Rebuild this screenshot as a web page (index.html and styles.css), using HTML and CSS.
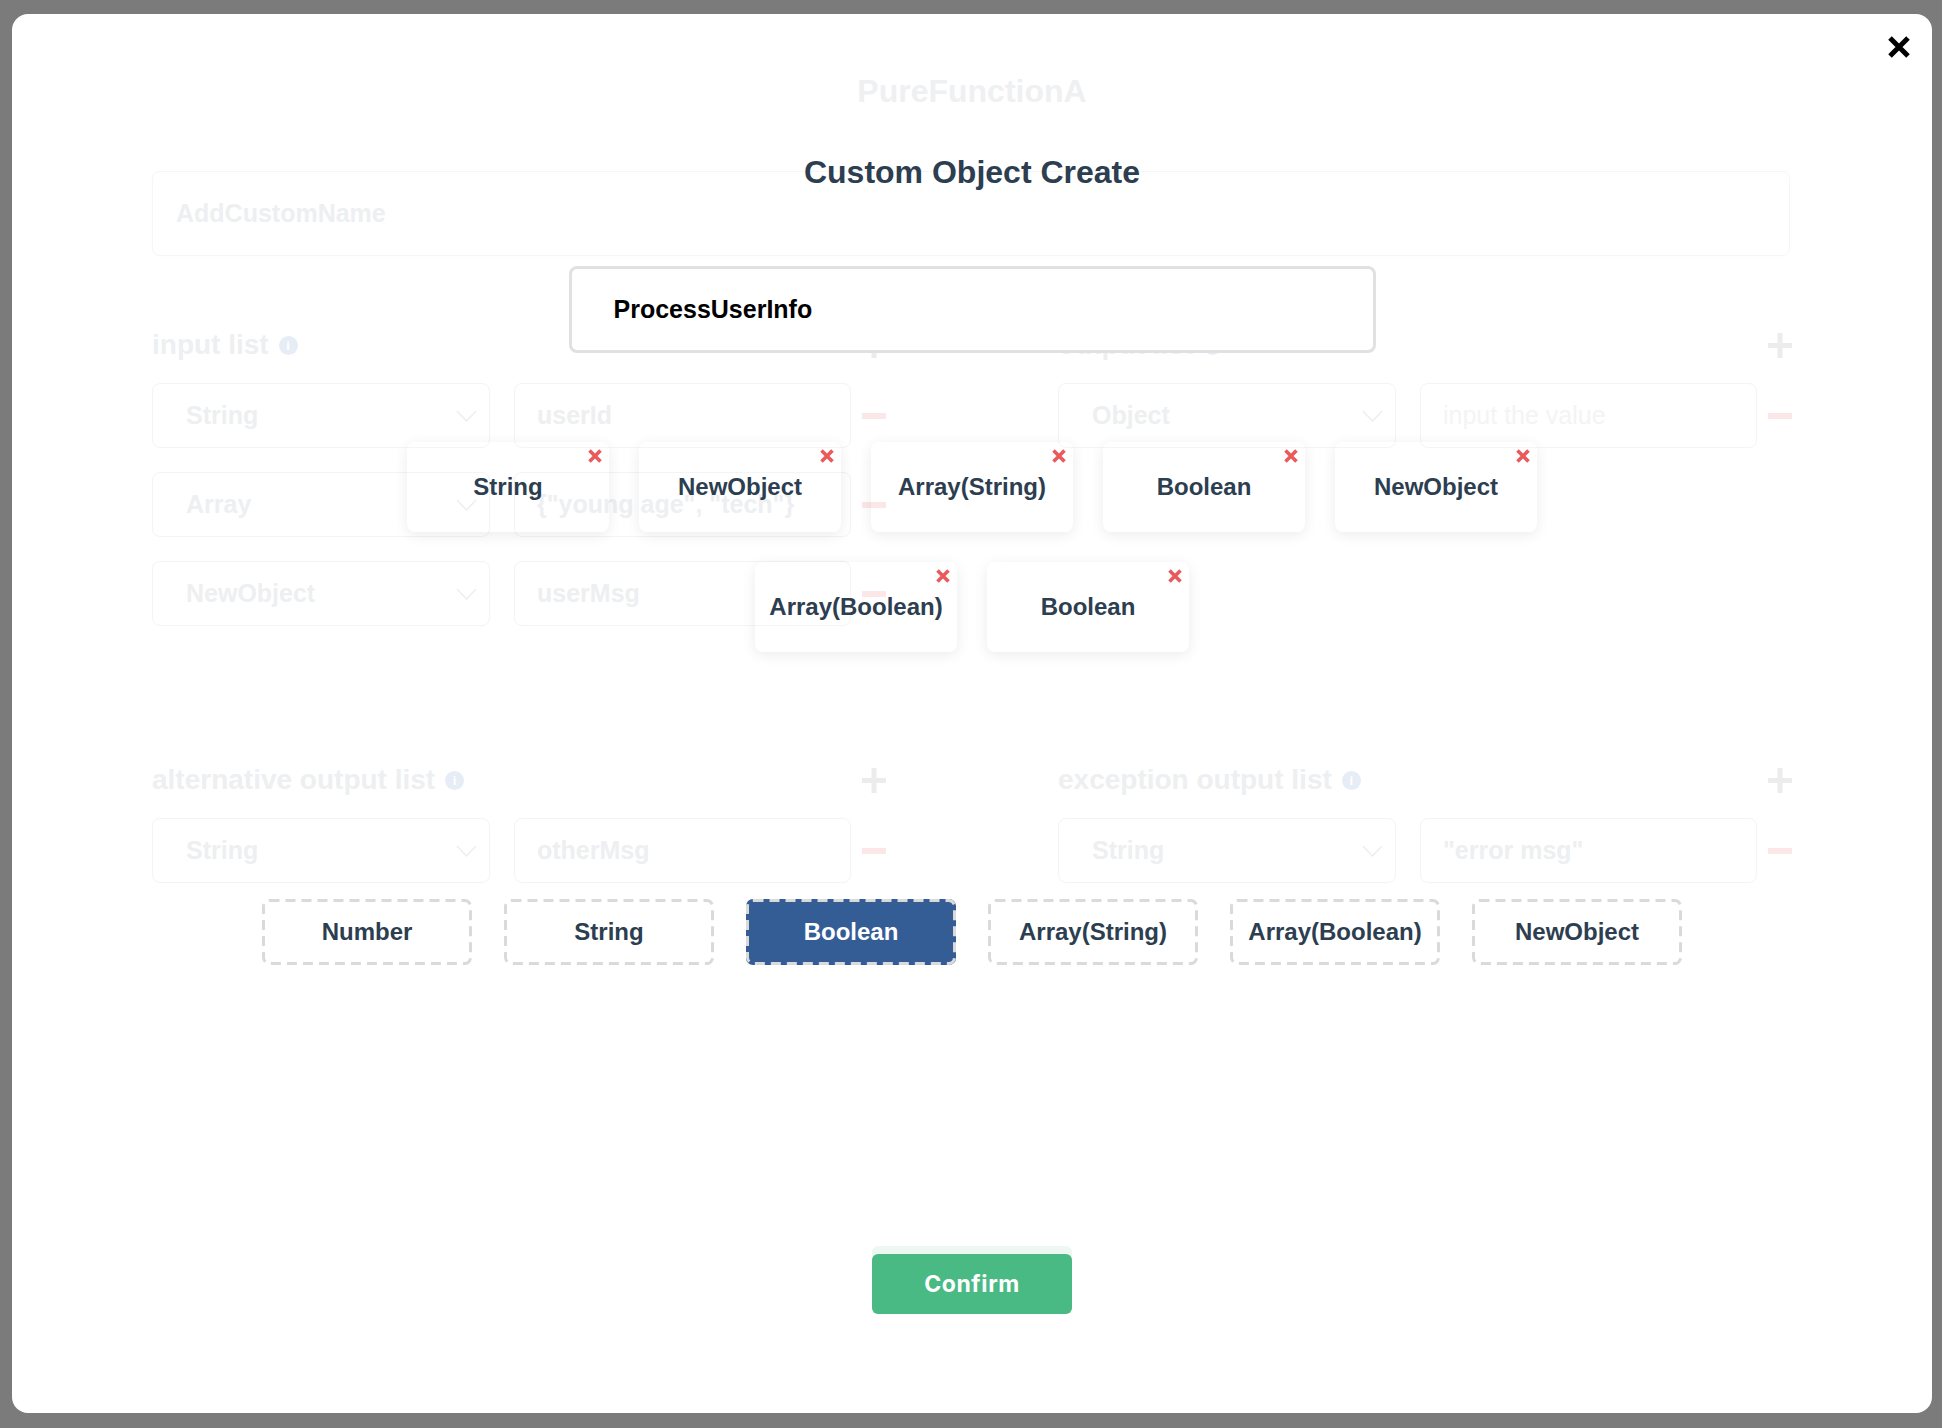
FILE: index.html
```html
<!DOCTYPE html>
<html lang="en">
<head>
<meta charset="utf-8">
<title>Custom Object Create</title>
<link rel="stylesheet" href="styles.css">
</head>
<body>
<div class="backdrop">
  <div class="modal">
    <div class="bg-form">
      <div class="pf-title">PureFunctionA</div>
      <div class="name-box">AddCustomName</div>
      <div class="sections">
        <section class="col">
          <div class="sec-head"><span class="sec-title">input list</span><span class="info">i</span><span class="plus"><svg width="24" height="25" viewBox="0 0 24 25"><path d="M12 0v25M0 12.5h24" stroke="#ececec" stroke-width="5"/></svg></span></div>
          <div class="rows">
            <div class="row"><div class="sel"><span>String</span><svg width="21" height="12" viewBox="0 0 21 12"><polyline points="1,1 10.5,11 20,1" fill="none" stroke="#eeeeee" stroke-width="1.5"/></svg></div><div class="val">userId</div><span class="minus"></span></div>
            <div class="row"><div class="sel"><span>Array</span><svg width="21" height="12" viewBox="0 0 21 12"><polyline points="1,1 10.5,11 20,1" fill="none" stroke="#eeeeee" stroke-width="1.5"/></svg></div><div class="val">{"young age", "tech"}</div><span class="minus"></span></div>
            <div class="row"><div class="sel"><span>NewObject</span><svg width="21" height="12" viewBox="0 0 21 12"><polyline points="1,1 10.5,11 20,1" fill="none" stroke="#eeeeee" stroke-width="1.5"/></svg></div><div class="val">userMsg</div><span class="minus"></span></div>
          </div>
        </section>
        <section class="col">
          <div class="sec-head"><span class="sec-title">output list</span><span class="info">i</span><span class="plus"><svg width="24" height="25" viewBox="0 0 24 25"><path d="M12 0v25M0 12.5h24" stroke="#ececec" stroke-width="5"/></svg></span></div>
          <div class="rows">
            <div class="row"><div class="sel"><span>Object</span><svg width="21" height="12" viewBox="0 0 21 12"><polyline points="1,1 10.5,11 20,1" fill="none" stroke="#eeeeee" stroke-width="1.5"/></svg></div><div class="val ph">input the value</div><span class="minus"></span></div>
          </div>
        </section>
      </div>
      <div class="sections sections-2">
        <section class="col">
          <div class="sec-head"><span class="sec-title">alternative output list</span><span class="info">i</span><span class="plus"><svg width="24" height="25" viewBox="0 0 24 25"><path d="M12 0v25M0 12.5h24" stroke="#ececec" stroke-width="5"/></svg></span></div>
          <div class="rows">
            <div class="row"><div class="sel"><span>String</span><svg width="21" height="12" viewBox="0 0 21 12"><polyline points="1,1 10.5,11 20,1" fill="none" stroke="#eeeeee" stroke-width="1.5"/></svg></div><div class="val">otherMsg</div><span class="minus"></span></div>
          </div>
        </section>
        <section class="col">
          <div class="sec-head"><span class="sec-title">exception output list</span><span class="info">i</span><span class="plus"><svg width="24" height="25" viewBox="0 0 24 25"><path d="M12 0v25M0 12.5h24" stroke="#ececec" stroke-width="5"/></svg></span></div>
          <div class="rows">
            <div class="row"><div class="sel"><span>String</span><svg width="21" height="12" viewBox="0 0 21 12"><polyline points="1,1 10.5,11 20,1" fill="none" stroke="#eeeeee" stroke-width="1.5"/></svg></div><div class="val">"error msg"</div><span class="minus"></span></div>
          </div>
        </section>
      </div>
      <div class="ghost-confirm"></div>
    </div>

    <div class="fg">
      <h2 class="title">Custom Object Create</h2>
      <div class="name-input">ProcessUserInfo</div>
      <div class="tags">
        <div class="tag">String<span class="tag-x"><svg width="14" height="14" viewBox="0 0 14 14"><path d="M1.5 1.5L12.5 12.5M12.5 1.5L1.5 12.5" stroke="#eb5a5a" stroke-width="3.6"/></svg></span></div>
        <div class="tag">NewObject<span class="tag-x"><svg width="14" height="14" viewBox="0 0 14 14"><path d="M1.5 1.5L12.5 12.5M12.5 1.5L1.5 12.5" stroke="#eb5a5a" stroke-width="3.6"/></svg></span></div>
        <div class="tag">Array(String)<span class="tag-x"><svg width="14" height="14" viewBox="0 0 14 14"><path d="M1.5 1.5L12.5 12.5M12.5 1.5L1.5 12.5" stroke="#eb5a5a" stroke-width="3.6"/></svg></span></div>
        <div class="tag">Boolean<span class="tag-x"><svg width="14" height="14" viewBox="0 0 14 14"><path d="M1.5 1.5L12.5 12.5M12.5 1.5L1.5 12.5" stroke="#eb5a5a" stroke-width="3.6"/></svg></span></div>
        <div class="tag">NewObject<span class="tag-x"><svg width="14" height="14" viewBox="0 0 14 14"><path d="M1.5 1.5L12.5 12.5M12.5 1.5L1.5 12.5" stroke="#eb5a5a" stroke-width="3.6"/></svg></span></div>
        <div class="tag">Array(Boolean)<span class="tag-x"><svg width="14" height="14" viewBox="0 0 14 14"><path d="M1.5 1.5L12.5 12.5M12.5 1.5L1.5 12.5" stroke="#eb5a5a" stroke-width="3.6"/></svg></span></div>
        <div class="tag">Boolean<span class="tag-x"><svg width="14" height="14" viewBox="0 0 14 14"><path d="M1.5 1.5L12.5 12.5M12.5 1.5L1.5 12.5" stroke="#eb5a5a" stroke-width="3.6"/></svg></span></div>
      </div>
      <div class="types">
        <div class="type"><svg class="dash" width="210" height="66" viewBox="0 0 210 66"><rect x="1.5" y="1.5" width="207" height="63" rx="6" fill="none" stroke="#dadada" stroke-width="3" stroke-dasharray="10 6"/></svg>Number</div>
        <div class="type"><svg class="dash" width="210" height="66" viewBox="0 0 210 66"><rect x="1.5" y="1.5" width="207" height="63" rx="6" fill="none" stroke="#dadada" stroke-width="3" stroke-dasharray="10 6"/></svg>String</div>
        <div class="type active"><svg class="dash" width="210" height="66" viewBox="0 0 210 66"><rect x="1.5" y="1.5" width="207" height="63" rx="6" fill="none" stroke="#dadada" stroke-width="3" stroke-dasharray="10 6"/></svg>Boolean</div>
        <div class="type"><svg class="dash" width="210" height="66" viewBox="0 0 210 66"><rect x="1.5" y="1.5" width="207" height="63" rx="6" fill="none" stroke="#dadada" stroke-width="3" stroke-dasharray="10 6"/></svg>Array(String)</div>
        <div class="type"><svg class="dash" width="210" height="66" viewBox="0 0 210 66"><rect x="1.5" y="1.5" width="207" height="63" rx="6" fill="none" stroke="#dadada" stroke-width="3" stroke-dasharray="10 6"/></svg>Array(Boolean)</div>
        <div class="type"><svg class="dash" width="210" height="66" viewBox="0 0 210 66"><rect x="1.5" y="1.5" width="207" height="63" rx="6" fill="none" stroke="#dadada" stroke-width="3" stroke-dasharray="10 6"/></svg>NewObject</div>
      </div>
      <button class="confirm">Confirm</button>
    </div>

    <button class="close" aria-label="close"><svg width="24" height="24" viewBox="0 0 24 24"><path d="M3 3L21 21M21 3L3 21" stroke="#000" stroke-width="5"/></svg></button>
  </div>
</div>
</body>
</html>
```

FILE: styles.css
```css
* { box-sizing: border-box; }
html, body { margin: 0; padding: 0; }
body {
  width: 1942px;
  height: 1428px;
  overflow: hidden;
  background: #7b7b7b;
  font-family: "Liberation Sans", Arial, sans-serif;
}
.backdrop {
  height: 1428px;
  padding: 14px 10px 15px 12px;
}
.modal {
  position: relative;
  width: 1920px;
  height: 1399px;
  background: #fff;
  border-radius: 16px;
  overflow: hidden;
}

/* faded form behind */
.bg-form { padding: 57px 140px 0; }
.pf-title {
  font-size: 32px;
  line-height: 40px;
  font-weight: 700;
  color: #eff0f2;
  text-align: center;
}
.name-box {
  margin-top: 60px;
  width: 1638px;
  height: 85px;
  border: 1px solid #f5f5f5;
  border-radius: 8px;
  padding-left: 23px;
  display: flex;
  align-items: center;
  font-size: 25px;
  font-weight: 700;
  color: #edeff1;
  box-shadow: 0 0 6px rgba(0,0,0,0.015);
}
.sections {
  display: grid;
  grid-template-columns: 734px 734px;
  column-gap: 172px;
  margin-top: 69px;
}
.sections-2 { margin-top: 134px; }
.sec-head {
  height: 40px;
  display: flex;
  align-items: center;
}
.sec-title {
  font-size: 28px;
  font-weight: 700;
  color: #edeff1;
}
.info {
  width: 19px;
  height: 19px;
  margin-left: 10px;
  border-radius: 50%;
  background: #e7edf6;
  color: #fff;
  font-size: 13px;
  font-weight: 700;
  display: flex;
  align-items: center;
  justify-content: center;
}
.plus { margin-left: auto; display: flex; }
.rows {
  margin-top: 18px;
  display: flex;
  flex-direction: column;
  gap: 24px;
}
.row {
  height: 65px;
  display: flex;
  align-items: center;
}
.sel, .val {
  height: 65px;
  border: 1px solid #f4f4f4;
  border-radius: 8px;
  display: flex;
  align-items: center;
  font-size: 25px;
  font-weight: 700;
  color: #edeff1;
  box-shadow: 0 0 6px rgba(0,0,0,0.012);
}
.sel {
  width: 338px;
  padding: 0 12px 0 33px;
  justify-content: space-between;
}
.val {
  width: 337px;
  margin-left: 24px;
  padding-left: 22px;
  white-space: nowrap;
}
.val.ph { font-weight: 400; color: #f3f4f5; }
.minus {
  margin-left: auto;
  width: 24px;
  height: 6px;
  background: #fbe7e8;
}
.ghost-confirm {
  margin: 363px auto 0;
  width: 200px;
  height: 60px;
  border-radius: 6px;
  background: #edf8f3;
}

/* foreground dialog content */
.fg {
  position: absolute;
  inset: 0;
  display: flex;
  flex-direction: column;
  align-items: center;
  padding-top: 138px;
}
.title {
  margin: 0;
  font-size: 32px;
  line-height: 40px;
  font-weight: 700;
  color: #2c3e50;
}
.name-input {
  margin-top: 74px;
  width: 807px;
  height: 87px;
  border: 3px solid #e1e1e1;
  border-radius: 8px;
  background: #fff;
  padding-left: 42px;
  display: flex;
  align-items: center;
  font-size: 25px;
  font-weight: 700;
  color: #000;
}
.tags {
  margin-top: 89px;
  width: 1140px;
  display: flex;
  flex-wrap: wrap;
  justify-content: center;
  gap: 30px;
}
.tag {
  position: relative;
  width: 202px;
  height: 90px;
  border-radius: 8px;
  box-shadow: 0 3px 14px rgba(0,0,0,0.08);
  display: flex;
  align-items: center;
  justify-content: center;
  font-size: 24px;
  font-weight: 700;
  color: #2c3e50;
}
.tag-x {
  position: absolute;
  top: 7px;
  right: 7px;
  width: 14px;
  height: 14px;
  display: flex;
}
.types {
  margin-top: 247px;
  display: flex;
  gap: 32px;
}
.type {
  position: relative;
  width: 210px;
  height: 66px;
  border-radius: 7px;
  background: #fff;
  display: flex;
  align-items: center;
  justify-content: center;
  font-size: 24px;
  font-weight: 700;
  color: #2c3e50;
}
.type .dash {
  position: absolute;
  top: 0;
  left: 0;
}
.type.active { background: #345d96; color: #fff; }
.confirm {
  margin-top: 289px;
  width: 200px;
  height: 60px;
  border: 0;
  border-radius: 6px;
  background: #4aba85;
  color: #fff;
  font-family: Inter, "Liberation Sans", sans-serif;
  font-size: 23px;
  font-weight: 700;
  letter-spacing: 0.6px;
  padding: 0;
}
.close {
  position: absolute;
  top: 21px;
  right: 21px;
  width: 24px;
  height: 24px;
  padding: 0;
  border: 0;
  background: transparent;
  display: flex;
}
```
